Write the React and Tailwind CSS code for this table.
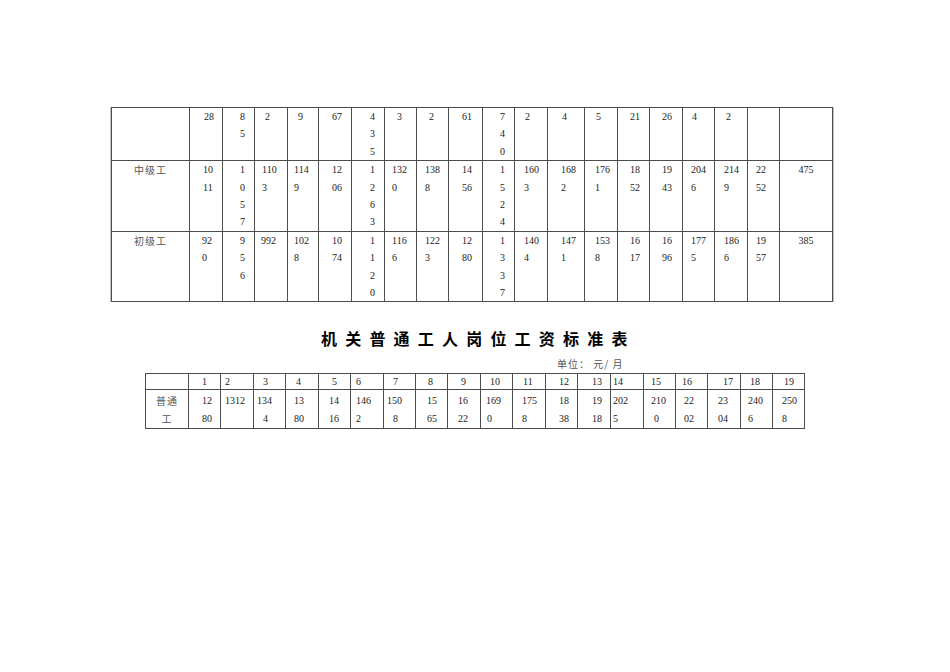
import React from "react";
import clsx from "clsx";

// 上表：中级工 / 初级工
const topRows = [
  [
    null,
    { t: ["28"], p: "pl-[14px]" },
    { t: ["8", "5"], p: "pl-[17px]" },
    { t: ["2"], p: "pl-[10px]" },
    { t: ["9"], p: "pl-[10px]" },
    { t: ["67"], p: "pl-[13px]" },
    { t: ["4", "3", "5"], p: "pl-[18px]" },
    { t: ["3"], p: "pl-[12px]" },
    { t: ["2"], p: "pl-[12px]" },
    { t: ["61"], p: "pl-[13px]" },
    { t: ["7", "4", "0"], p: "pl-[17px]" },
    { t: ["2"], p: "pl-[10px]" },
    { t: ["4"], p: "pl-[14px]" },
    { t: ["5"], p: "pl-[11px]" },
    { t: ["21"], p: "pl-[12px]" },
    { t: ["26"], p: "pl-[12px]" },
    { t: ["4"], p: "pl-[9px]" },
    { t: ["2"], p: "pl-[11px]" },
    null,
    null,
  ],
  [
    { t: ["中级工"], c: true, label: true },
    { t: ["10", "11"], p: "pl-[13px]" },
    { t: ["1", "0", "5", "7"], p: "pl-[17px]" },
    { t: ["110", "3"], p: "pl-[7px]" },
    { t: ["114", "9"], p: "pl-[6px]" },
    { t: ["12", "06"], p: "pl-[13px]" },
    { t: ["1", "2", "6", "3"], p: "pl-[18px]" },
    { t: ["132", "0"], p: "pl-[7px]" },
    { t: ["138", "8"], p: "pl-[8px]" },
    { t: ["14", "56"], p: "pl-[13px]" },
    { t: ["1", "5", "2", "4"], p: "pl-[17px]" },
    { t: ["160", "3"], p: "pl-[9px]" },
    { t: ["168", "2"], p: "pl-[13px]" },
    { t: ["176", "1"], p: "pl-[10px]" },
    { t: ["18", "52"], p: "pl-[12px]" },
    { t: ["19", "43"], p: "pl-[12px]" },
    { t: ["204", "6"], p: "pl-[8px]" },
    { t: ["214", "9"], p: "pl-[9px]" },
    { t: ["22", "52"], p: "pl-[8px]" },
    { t: ["475"], c: true },
  ],
  [
    { t: ["初级工"], c: true, label: true },
    { t: ["92", "0"], p: "pl-[12px]" },
    { t: ["9", "5", "6"], p: "pl-[17px]" },
    { t: ["992"], p: "pl-[6px]" },
    { t: ["102", "8"], p: "pl-[6px]" },
    { t: ["10", "74"], p: "pl-[13px]" },
    { t: ["1", "1", "2", "0"], p: "pl-[18px]" },
    { t: ["116", "6"], p: "pl-[7px]" },
    { t: ["122", "3"], p: "pl-[8px]" },
    { t: ["12", "80"], p: "pl-[13px]" },
    { t: ["1", "3", "3", "7"], p: "pl-[17px]" },
    { t: ["140", "4"], p: "pl-[9px]" },
    { t: ["147", "1"], p: "pl-[13px]" },
    { t: ["153", "8"], p: "pl-[10px]" },
    { t: ["16", "17"], p: "pl-[12px]" },
    { t: ["16", "96"], p: "pl-[12px]" },
    { t: ["177", "5"], p: "pl-[8px]" },
    { t: ["186", "6"], p: "pl-[9px]" },
    { t: ["19", "57"], p: "pl-[8px]" },
    { t: ["385"], c: true },
  ],
];

// 下表：机关普通工人
const headPl = [
  "pl-[13px]", "pl-[4px]", "pl-[9px]", "pl-[10px]", "pl-[13px]", "pl-[5px]", "pl-[9px]",
  "pl-[12px]", "pl-[13px]", "pl-[9px]", "pl-[10px]", "pl-[13px]", "pl-[14px]", "pl-[2px]",
  "pl-[7px]", "pl-[6px]", "pl-[15px]", "pl-[9px]", "pl-[11px]",
];

const workerRow = [
  { t: ["普通", "工"], c: true, label: true },
  { t: ["12", "80"], p: "pl-[13px]" },
  { t: ["1312"], p: "pl-[4px]" },
  { t: ["134", ["4", "pl-[6px]"]], p: "pl-[3px]" },
  { t: ["13", "80"], p: "pl-[8px]" },
  { t: ["14", "16"], p: "pl-[10px]" },
  { t: ["146", "2"], p: "pl-[5px]" },
  { t: ["150", ["8", "pl-[6px]"]], p: "pl-[3px]" },
  { t: ["15", "65"], p: "pl-[11px]" },
  { t: ["16", "22"], p: "pl-[10px]" },
  { t: ["169", ["0", "pl-[1px]"]], p: "pl-[5px]" },
  { t: ["175", "8"], p: "pl-[9px]" },
  { t: ["18", "38"], p: "pl-[13px]" },
  { t: ["19", "18"], p: "pl-[14px]" },
  { t: ["202", "5"], p: "pl-[2px]" },
  { t: ["210", ["0", "pl-[3px]"]], p: "pl-[7px]" },
  { t: ["22", "02"], p: "pl-[8px]" },
  { t: ["23", "04"], p: "pl-[10px]" },
  { t: ["240", "6"], p: "pl-[7px]" },
  { t: ["250", "8"], p: "pl-[9px]" },
];

const Cell = ({ cell, className }) => {
  if (!cell) return <div className={clsx("bg-white", className)} />;
  return (
    <div
      className={clsx(
        "bg-white whitespace-nowrap",
        cell.c ? "text-center" : "text-left",
        cell.label && "font-['Noto_Sans_CJK_SC',sans-serif] text-[#555] tracking-[1px]",
        cell.p,
        className
      )}
    >
      {cell.t.map((ln, i) =>
        Array.isArray(ln) ? (
          <div key={i} className={ln[1]}>
            {ln[0]}
          </div>
        ) : (
          <div key={i}>{ln}</div>
        )
      )}
    </div>
  );
};

export default function App() {
  return (
    <div className="min-h-screen bg-white text-[#222] font-['Liberation_Serif','Noto_Sans_CJK_SC',serif]">
      {/* 上表 */}
      <div className="pt-[107px] pl-[110px]">
        <div className="w-max border-x border-[#c4c4c4]">
          <div className="grid w-max grid-cols-[77px_32px_31px_32px_30px_32px_32px_31px_31px_33px_31px_32px_36px_32px_31px_32px_31px_32px_31px_52px] gap-px bg-[#4d4d4d] p-px text-[10px] leading-[17.4px]">
            {topRows.map((row, r) =>
              row.map((cell, i) => <Cell key={r + "-" + i} cell={cell} />)
            )}
          </div>
        </div>
      </div>

      {/* 标题 */}
      <h1 className="mt-[26px] pl-[321px] text-[16px] leading-[20px] font-bold tracking-[8.2px] text-black font-['Noto_Sans_CJK_SC',sans-serif]">
        机关普通工人岗位工资标准表
      </h1>
      <div className="mt-[9px] pl-[557px] text-[10px] leading-[14px] tracking-[1px] text-[#555] font-['Noto_Sans_CJK_SC',sans-serif]">
        单位： 元/ 月
      </div>

      {/* 下表 */}
      <div className="mt-[2px] pl-[145px]">
        <div className="grid w-max grid-cols-[42px_31px_32px_31px_32px_31px_32px_31px_31px_32px_31px_32px_31px_32px_32px_31px_31px_32px_31px_31px] gap-px bg-[#4d4d4d] p-px text-[10px]">
          <div className="bg-white" />
          {headPl.map((p, i) => (
            <div key={"h" + i} className={clsx("bg-white leading-[15px]", p)}>
              {i + 1}
            </div>
          ))}
          {workerRow.map((cell, i) => (
            <Cell key={"w" + i} cell={cell} className="pt-[2px] leading-[18px]" />
          ))}
        </div>
      </div>
    </div>
  );
}
